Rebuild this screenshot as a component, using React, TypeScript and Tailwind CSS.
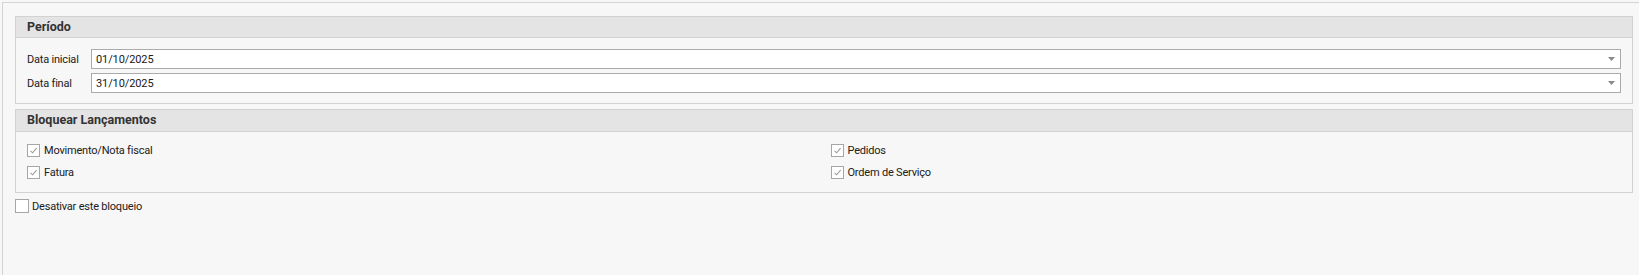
import React from "react";

const font = { fontFamily: "Roboto, 'Liberation Sans', sans-serif" };

function Check({ checked }: { checked: boolean }) {
  return (
    <span className="w-[13px] h-[13px] border border-[#a6a6a6] bg-white flex items-center justify-center shrink-0">
      {checked && (
        <svg width="9" height="9" viewBox="0 0 9 9">
          <path d="M1.5 4.8 L3.6 6.8 L7.6 2.2" fill="none" stroke="#9a9a9a" strokeWidth="1.1" />
        </svg>
      )}
    </span>
  );
}

function CheckRow({ label, checked }: { label: string; checked: boolean }) {
  return (
    <div className="flex items-center gap-[4px] h-[13px]">
      <Check checked={checked} />
      <span className="text-[11px] tracking-[-0.2px] text-[#202020] leading-none">{label}</span>
    </div>
  );
}

function DateInput({ value }: { value: string }) {
  return (
    <div className="flex-1 h-[20px] border border-[#ababab] bg-white flex items-center pl-[4px] pr-[5px]">
      <span className="flex-1 text-[11px] tracking-[-0.1px] text-[#202020] leading-none">{value}</span>
      <svg width="7" height="4" viewBox="0 0 7 4">
        <path d="M0 0 H7 L3.5 4 Z" fill="#8a8a8a" />
      </svg>
    </div>
  );
}

export default function App() {
  return (
    <div className="w-[1639px] h-[275px] bg-[#f7f7f7] pt-[2px] pl-[2px] overflow-hidden" style={font}>
      <div className="h-[273px] border-t border-l border-[#d4d4d4] pt-[13px] pl-[12px] pr-[6px]">
        <div className="border border-[#d2d2d2]">
          <div className="h-[21px] bg-[#e4e4e4] border-b border-[#d2d2d2] flex items-center pl-[11px]">
            <span className="text-[12.5px] font-bold text-[#333333] leading-none">Período</span>
          </div>
          <div className="pt-[11px] pb-[10px] pl-[11px] pr-[11px] flex flex-col gap-[4px]">
            <div className="flex items-center">
              <span className="w-[64px] text-[11px] tracking-[-0.2px] text-[#202020] leading-none">Data inicial</span>
              <DateInput value="01/10/2025" />
            </div>
            <div className="flex items-center">
              <span className="w-[64px] text-[11px] tracking-[-0.2px] text-[#202020] leading-none">Data final</span>
              <DateInput value="31/10/2025" />
            </div>
          </div>
        </div>
        <div className="mt-[5px] border border-[#d2d2d2]">
          <div className="h-[22px] bg-[#e4e4e4] border-b border-[#d2d2d2] flex items-center pl-[11px]">
            <span className="text-[12.5px] font-bold text-[#333333] leading-none">Bloquear Lançamentos</span>
          </div>
          <div className="pt-[12px] pb-[13px] pl-[11px] grid grid-cols-2">
            <div className="flex flex-col gap-[9px]">
              <CheckRow label="Movimento/Nota fiscal" checked />
              <CheckRow label="Fatura" checked />
            </div>
            <div className="flex flex-col gap-[9px] pl-[1px]">
              <CheckRow label="Pedidos" checked />
              <CheckRow label="Ordem de Serviço" checked />
            </div>
          </div>
        </div>
        <div className="mt-[6px] flex items-center gap-[3px]">
          <span className="w-[14px] h-[14px] border border-[#a6a6a6] bg-white shrink-0" />
          <span className="text-[11px] tracking-[-0.2px] text-[#202020] leading-none">Desativar este bloqueio</span>
        </div>
      </div>
    </div>
  );
}
